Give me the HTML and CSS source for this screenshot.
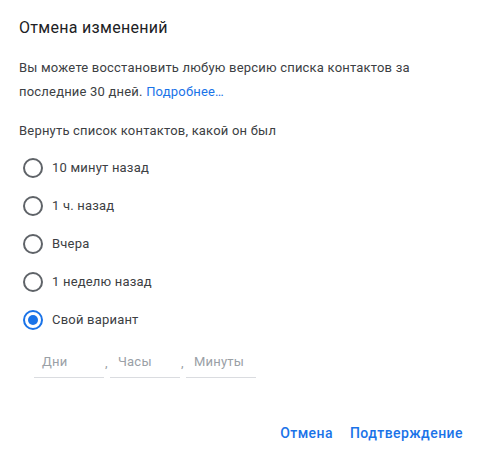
FILE: index.html
```html
<!DOCTYPE html>
<html lang="ru">
<head>
<meta charset="utf-8">
<link rel="stylesheet" href="styles.css">
</head>
<body>
<div class="dialog">
  <h1 class="title">Отмена изменений</h1>
  <p class="desc">Вы можете восстановить любую версию списка контактов за последние 30 дней. <a class="link" href="#">Подробнее…</a></p>
  <p class="label">Вернуть список контактов, какой он был</p>
  <div class="options">
    <label class="option"><span class="radio"></span><span>10 минут назад</span></label>
    <label class="option"><span class="radio"></span><span>1 ч. назад</span></label>
    <label class="option"><span class="radio"></span><span>Вчера</span></label>
    <label class="option"><span class="radio"></span><span>1 неделю назад</span></label>
    <label class="option"><span class="radio checked"></span><span>Свой вариант</span></label>
  </div>
  <div class="custom">
    <span class="field">Дни</span><span class="sep">,</span>
    <span class="field">Часы</span><span class="sep">,</span>
    <span class="field">Минуты</span>
  </div>
  <div class="actions">
    <a class="btn" href="#">Отмена</a>
    <a class="btn" href="#">Подтверждение</a>
  </div>
</div>
</body>
</html>
```

FILE: styles.css
```css
html, body {
  margin: 0;
  padding: 0;
  background: #fff;
}
body {
  font-family: Roboto, "Liberation Sans", sans-serif;
  color: #3c4043;
}
.dialog {
  width: 477px;
  height: 463px;
  box-sizing: border-box;
  padding: 17px 14px 0 19px;
  display: flex;
  flex-direction: column;
}
.title {
  margin: 0;
  font-size: 16px;
  font-weight: 400;
  color: #202124;
  line-height: 22px;
  letter-spacing: 0.3px;
}
.desc {
  margin: 17px 0 0;
  font-size: 13px;
  line-height: 24px;
  color: #3c4043;
  width: 430px;
  letter-spacing: 0.2px;
}
.link {
  color: #1a73e8;
  text-decoration: none;
}
.label {
  margin: 15px 0 0;
  font-size: 13px;
  line-height: 24px;
  letter-spacing: 0.2px;
}
.options {
  display: flex;
  flex-direction: column;
  margin-top: 5px;
}
.option {
  display: flex;
  align-items: center;
  height: 38px;
  font-size: 13px;
  color: #3c4043;
  letter-spacing: 0.2px;
}
.radio {
  width: 20px;
  height: 20px;
  box-sizing: border-box;
  border: 2px solid #5f6368;
  border-radius: 50%;
  margin: 2px 9px 0 4px;
  position: relative;
}
.radio.checked {
  border-color: #1a73e8;
}
.radio.checked::after {
  content: "";
  position: absolute;
  left: 3px;
  top: 3px;
  width: 10px;
  height: 10px;
  border-radius: 50%;
  background: #1a73e8;
}
.custom {
  display: flex;
  align-items: flex-end;
  margin: 15px 0 0 15px;
  font-size: 13px;
  letter-spacing: 0.2px;
}
.field {
  width: 62px;
  padding: 0 0 6px 8px;
  border-bottom: 1px solid #dadce0;
  color: #9aa0a6;
  line-height: 18px;
}
.sep {
  width: 5px;
  color: #9aa0a6;
  padding-bottom: 6px;
  line-height: 18px;
  text-align: left;
  padding-left: 1px;
}
.actions {
  display: flex;
  justify-content: flex-end;
  gap: 17px;
  margin-top: 45px;
}
.btn {
  color: #1a73e8;
  text-decoration: none;
  font-size: 14px;
  font-weight: 500;
  line-height: 20px;
  letter-spacing: 0.45px;
}
```
